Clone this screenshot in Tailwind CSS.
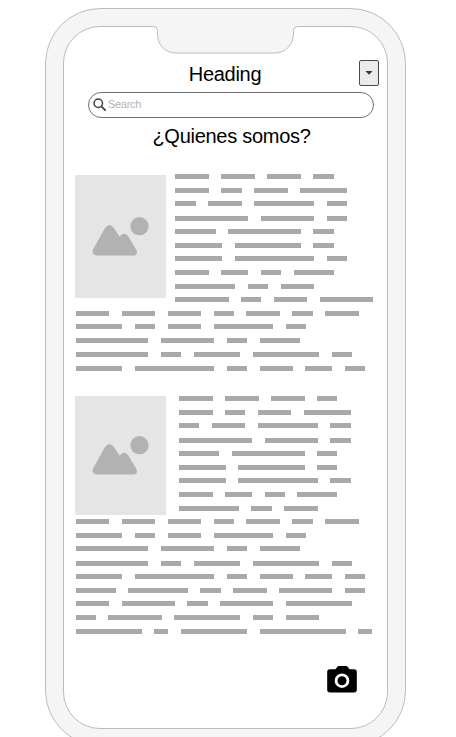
<!DOCTYPE html>
<html lang="es">
<head>
<meta charset="utf-8">
<title>¿Quienes somos?</title>
<script src="https://cdn.jsdelivr.net/npm/@tailwindcss/browser@4"></script>
</head>
<body class="bg-white">
<div class="relative h-[737px] w-[456px] overflow-hidden font-['Liberation_Sans',Arial,sans-serif] text-black">
  <!-- phone frame -->
  <svg class="absolute inset-0" width="456" height="737" viewBox="0 0 456 737" fill="none" stroke="#bcbcbc">
    <rect x="45.5" y="8.5" width="360" height="737" rx="55" fill="#f5f5f5"/>
    <path fill="#fff" d="M100 26.500H153.500Q157.500 26.500 157.500 30.500V33.500C157.500 45 165 53 176.500 53H275C286 53 293.500 44 293.500 33.500V30.500Q293.500 26.500 297.500 26.500H351A36.500 36.500 0 0 1 387.500 63V692A36.500 36.500 0 0 1 351 728.500H100A36.500 36.500 0 0 1 63.500 692V63A36.500 36.500 0 0 1 100 26.500Z"/>
  </svg>

  <main class="relative flex flex-col pl-[75px] pt-[60px]">
    <header class="flex h-[26px] w-[304px] items-start justify-between">
      <h1 class="w-[284px] pl-4 pt-[2px] text-center text-[20px] leading-6 tracking-[-0.3px]">Heading</h1>
      <button class="flex h-[26px] w-5 shrink-0 items-center justify-center rounded-[2px] border border-[#4a4a4a] bg-[#ebebeb]" aria-label="Menu">
        <svg width="8" height="4" viewBox="0 0 8 4"><path d="M.5 0H7.500L4 3.700Z" fill="#333"/></svg>
      </button>
    </header>

    <div class="ml-[13px] mt-[6px] flex h-[26px] w-[286px] items-center rounded-full border border-[#707070] bg-white pl-1">
      <svg width="14" height="14" viewBox="0 0 14 14" fill="none" stroke="#444"><circle cx="5.300" cy="5.300" r="4.200" stroke-width="1.500"/><path d="M8.300 8.300L12.700 12.700" stroke-width="1.900"/></svg>
      <span class="ml-[1px] pb-[2px] text-[11px] leading-4 tracking-[-0.3px] text-[#b3b3b3]">Search</span>
    </div>

    <h2 class="mt-[6px] w-[313px] text-center text-[20px] leading-6 tracking-[-0.28px]">¿Quienes somos?</h2>

    <section class="mt-[26px]">
      <div class="flex h-[137px]">
        <div class="ml-[0.3px] mt-[1px] h-[123px] w-[91px] bg-[#e5e5e5] pt-[41px]">
          <svg class="ml-[17px]" width="59" height="41" viewBox="0 0 59 41" fill="#b2b2b2"><circle cx="47.500" cy="10.200" r="9.100"/><path d="M1.300 33L12.300 13.200Q17.500 5.400 22.700 13.200L27.700 20.800C30.500 16.700 34 16.700 36.500 20.800L44 33.500C46 37 44.800 39.600 41.500 39.600H6C1.500 39.600-.8 37 1.300 33Z"/></svg>
        </div>
        <div class="ml-[9.200px]" data-text="narrow1"></div>
      </div>
      <div class="pl-[0.6px]" data-text="wide1"></div>
    </section>

    <section class="mt-[25px]">
      <div class="flex h-[123px]">
        <div class="ml-[0.3px] h-[119px] w-[91px] bg-[#e5e5e5] pt-[39px]">
          <svg class="ml-[17px]" width="59" height="41" viewBox="0 0 59 41" fill="#b2b2b2"><circle cx="47.500" cy="10.200" r="9.100"/><path d="M1.300 33L12.300 13.200Q17.500 5.400 22.700 13.200L27.700 20.800C30.500 16.700 34 16.700 36.500 20.800L44 33.500C46 37 44.800 39.600 41.500 39.600H6C1.500 39.600-.8 37 1.300 33Z"/></svg>
        </div>
        <div class="ml-[12.900px]" data-text="narrow2"></div>
      </div>
      <div class="pl-[0.6px]" data-text="wide2"></div>
    </section>

    <div class="mt-[32px] flex w-[282px] justify-end">
      <svg width="30" height="27" viewBox="0 0 30 27"><path d="M3 3.300H8.500L10 1.200Q10.800.1 12 .1H19Q20.200.1 21 1.200L22.500 3.300H27Q29.800 3.300 29.800 6V23.700Q29.800 26.400 27 26.400H3Q.2 26.400.2 23.700V6Q.2 3.300 3 3.300Z"/><circle cx="15" cy="14.700" r="5.900" stroke="#fff" stroke-width="2.800"/></svg>
    </div>
  </main>
</div>
<script>
  // Each row: [height until the next row, lengths of the words in characters]
  const CHAR = 6.571;
  const narrow = ["5 5 5 3", "5 3 5 7", "3 5 9 3", "11 8 3", "6 11 3", "7 10 3", "7 12 3", "5 4 3 6", "9 3 5", "8 3 5 8"];
  const wide = ["5 5 5 3 5 3 5", "7 3 5 9 3", "11 8 3 6", "11 3 7 10 3", "7 12 3 5 4 3", "6 9 3 5 8 3", "5 8 3 8 10", "3 8 10 3 5", "10 2 10 13 2"];
  const blocks = {
    narrow1: [narrow, [14, 13, 15, 13, 14, 13, 14, 14, 13, 14]],
    wide1: [wide.slice(0, 5), [13, 14, 14, 14, 5]],
    narrow2: [narrow.slice(0, 9), [14, 13, 15, 13, 14, 13, 14, 14, 5]],
    wide2: [wide, [14, 13, 15, 13, 14, 13, 14, 14, 5]]
  };
  for (const el of document.querySelectorAll("[data-text]")) {
    const [lines, steps] = blocks[el.dataset.text];
    el.innerHTML = lines.map((line, i) =>
      `<div class="flex gap-[12.54px]" style="height:${steps[i]}px">` +
      line.split(" ").map(n => `<i class="h-[5px] shrink-0 bg-[#a9a9a9]" style="width:${(n * CHAR + 0.6).toFixed(2)}px"></i>`).join("") +
      `</div>`).join("");
  }
</script>
</body>
</html>
